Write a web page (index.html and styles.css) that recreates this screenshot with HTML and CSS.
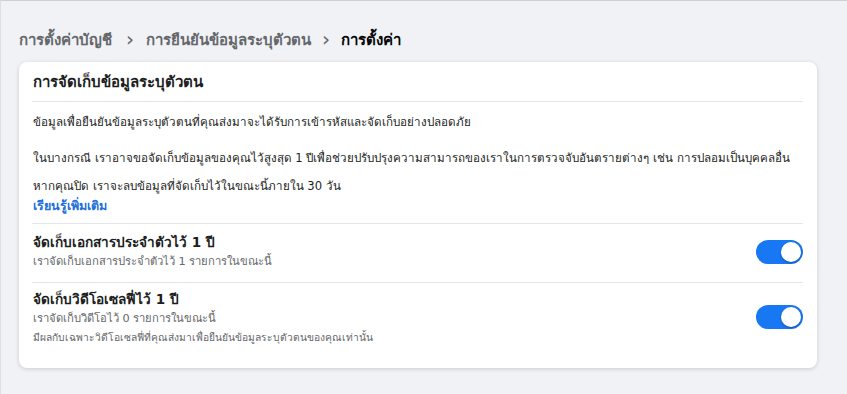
FILE: index.html
```html
<!DOCTYPE html>
<html lang="th">
<head>
    <meta charset="UTF-8">
    <meta name="viewport" content="width=device-width, initial-scale=1.0">
    <title>การตั้งค่า</title>
    <link rel="stylesheet" href="styles.css">
</head>
<body>
    <div class="page">
        <!-- Breadcrumb -->
        <nav class="crumbs">
            <span class="crumb">การตั้งค่าบัญชี</span>
            <span class="sep">&#8250;</span>
            <span class="crumb">การยืนยันข้อมูลระบุตัวตน</span>
            <span class="sep">&#8250;</span>
            <span class="crumb current">การตั้งค่า</span>
        </nav>

        <!-- Card -->
        <div class="card">
            <h2 class="card-title">การจัดเก็บข้อมูลระบุตัวตน</h2>

            <div class="info">
                <p class="p1">ข้อมูลเพื่อยืนยันข้อมูลระบุตัวตนที่คุณส่งมาจะได้รับการเข้ารหัสและจัดเก็บอย่างปลอดภัย</p>
                <p class="p2">ในบางกรณี เราอาจขอจัดเก็บข้อมูลของคุณไว้สูงสุด 1 ปีเพื่อช่วยปรับปรุงความสามารถของเราในการตรวจจับอันตรายต่างๆ เช่น การปลอมเป็นบุคคลอื่น</p>
                <p class="p3">หากคุณปิด เราจะลบข้อมูลที่จัดเก็บไว้ในขณะนี้ภายใน 30 วัน</p>
                <a class="more" href="#">เรียนรู้เพิ่มเติม</a>
            </div>

            <div class="row">
                <div class="row-text">
                    <div class="row-title">จัดเก็บเอกสารประจำตัวไว้ 1 ปี</div>
                    <div class="row-sub">เราจัดเก็บเอกสารประจำตัวไว้ 1 รายการในขณะนี้</div>
                </div>
                <span class="toggle on"><span class="knob"></span></span>
            </div>

            <div class="row last">
                <div class="row-text">
                    <div class="row-title">จัดเก็บวิดีโอเซลฟี่ไว้ 1 ปี</div>
                    <div class="row-sub">เราจัดเก็บวิดีโอไว้ 0 รายการในขณะนี้</div>
                    <div class="row-note">มีผลกับเฉพาะวิดีโอเซลฟี่ที่คุณส่งมาเพื่อยืนยันข้อมูลระบุตัวตนของคุณเท่านั้น</div>
                </div>
                <span class="toggle on"><span class="knob"></span></span>
            </div>
        </div>
    </div>
</body>
</html>
```

FILE: styles.css
```css
html, body {
    margin: 0;
    height: 100%;
}
body {
    font-family: Tahoma, "DejaVu Sans", sans-serif;
    background-color: #f0f2f5;
    color: #1c1e21;
    border-top: 1px solid #ccd0d5;
    border-left: 1px solid #dcdfe4;
    box-sizing: border-box;
}
.page {
    padding: 24px 30px 0 18px;
}
.crumbs {
    display: flex;
    align-items: center;
    font-size: 15px;
    font-weight: bold;
    color: #65676b;
    height: 30px;
    margin-bottom: 7px;
}
.sep {
    font-size: 20px;
    font-weight: normal;
    margin: 0 12px 3px 14px;
}
.sep + .crumb + .sep {
    margin: 0 11px 3px 11px;
}
.crumb.current {
    color: #050505;
}
.card {
    background-color: #fff;
    border-radius: 8px;
    box-shadow: 0 1px 4px rgba(0, 0, 0, 0.16);
    padding: 0 14px 23px 13px;
}
.card-title {
    margin: 0;
    font-size: 15px;
    font-weight: bold;
    line-height: 20px;
    padding: 10px 0 9px 1px;
    border-bottom: 1px solid #e4e6eb;
}
.info {
    font-size: 11.6px;
    line-height: 20px;
    padding: 10px 0 7px 1px;
    border-bottom: 1px solid #e4e6eb;
}
.info p {
    margin: 0;
}
.info .p1 {
    margin-bottom: 16px;
}
.info .p2 {
    margin-bottom: 8px;
}
.more {
    display: block;
    font-size: 12.5px;
    color: #216fdb;
    font-weight: bold;
    text-decoration: none;
}
.row {
    display: flex;
    align-items: center;
    justify-content: space-between;
    padding: 8px 0 10px 1px;
    border-bottom: 1px solid #e4e6eb;
}
.row.last {
    border-bottom: none;
    padding-bottom: 0;
    padding-top: 6px;
}
.row-title {
    font-size: 13.6px;
    font-weight: bold;
    line-height: 20px;
}
.row-sub {
    font-size: 11.25px;
    line-height: 20px;
    color: #65676b;
}
.row-note {
    font-size: 10.25px;
    line-height: 16px;
    color: #65676b;
}
.toggle {
    width: 47px;
    height: 24px;
    border-radius: 12px;
    background-color: #1877f2;
    display: flex;
    align-items: center;
    justify-content: flex-end;
    padding: 0 2px;
    box-sizing: border-box;
}
.knob {
    width: 20px;
    height: 20px;
    border-radius: 50%;
    background-color: #fff;
    box-shadow: 0 1px 2px rgba(0, 0, 0, 0.3);
}
```
